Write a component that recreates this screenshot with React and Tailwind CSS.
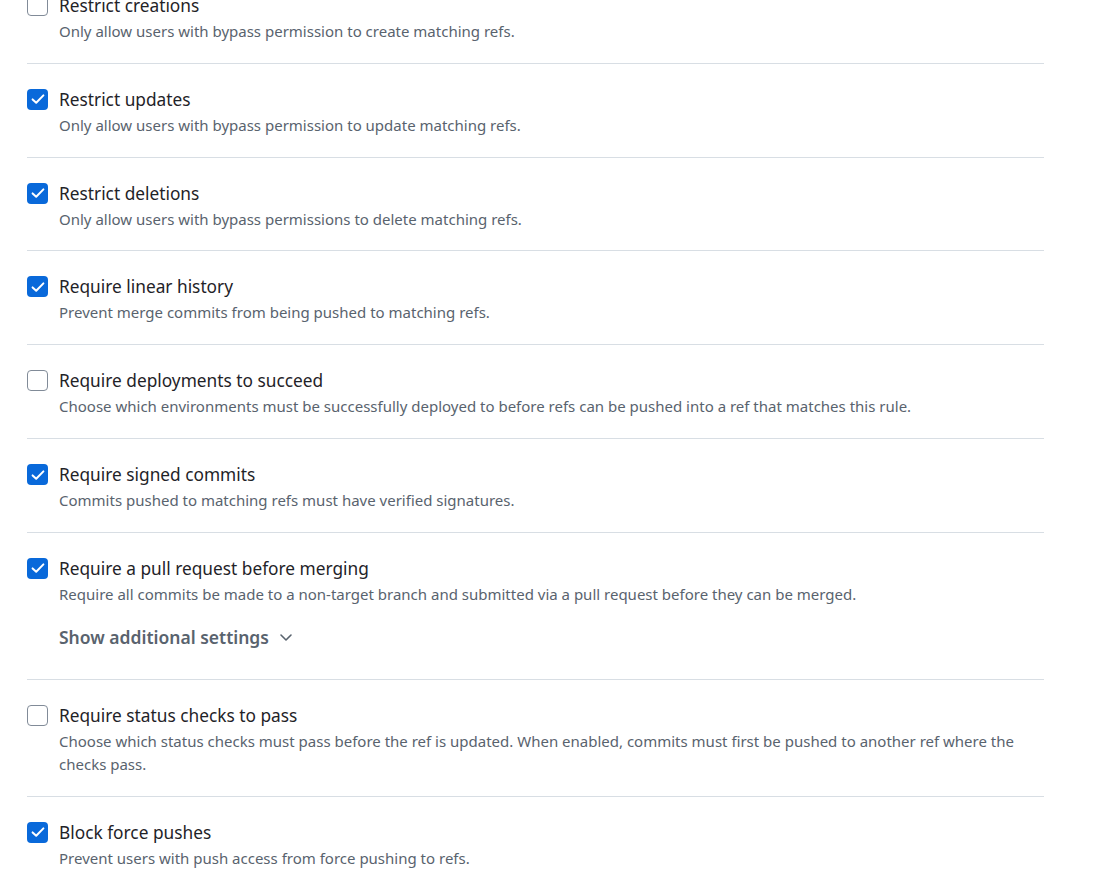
import React from "react";

const rows = [
  { title: "Restrict creations", desc: "Only allow users with bypass permission to create matching refs.", checked: false },
  { title: "Restrict updates", desc: "Only allow users with bypass permission to update matching refs.", checked: true },
  { title: "Restrict deletions", desc: "Only allow users with bypass permissions to delete matching refs.", checked: true },
  { title: "Require linear history", desc: "Prevent merge commits from being pushed to matching refs.", checked: true },
  { title: "Require deployments to succeed", desc: "Choose which environments must be successfully deployed to before refs can be pushed into a ref that matches this rule.", checked: false },
  { title: "Require signed commits", desc: "Commits pushed to matching refs must have verified signatures.", checked: true },
  { title: "Require a pull request before merging", desc: "Require all commits be made to a non-target branch and submitted via a pull request before they can be merged.", checked: true, more: true },
  { title: "Require status checks to pass", desc: (<>Choose which status checks must pass before the ref is updated. When enabled, commits must first be pushed to another ref where the<br />checks pass.</>), checked: false },
  { title: "Block force pushes", desc: "Prevent users with push access from force pushing to refs.", checked: true },
];

function Box({ checked }) {
  if (checked) {
    return (
      <span className="mt-[1px] flex h-[21px] w-[21px] shrink-0 items-center justify-center rounded-[4px] bg-[#0969da]">
        <svg width="16" height="16" viewBox="0 0 16 16" fill="none">
          <path d="M2.6 8.4 L6.2 11.8 L13.4 4.4" stroke="#ffffff" strokeWidth="2" strokeLinecap="round" strokeLinejoin="round" />
        </svg>
      </span>
    );
  }
  return <span className="mt-[1px] block h-[21px] w-[21px] shrink-0 rounded-[4px] border border-[#818b98] bg-white" />;
}

export default function App() {
  return (
    <div className="min-h-screen bg-white" style={{ fontFamily: '"Noto Sans", "Open Sans", sans-serif' }}>
      <div className="ml-[27px] w-[1017px] -mt-[30px]">
        {rows.map((r, i) => (
          <div key={i} className={`flex gap-[11px] pt-[24px] ${r.more ? "pb-[26px]" : "pb-[19.84px]"} ${i < rows.length - 1 ? "border-b border-[#d8dee4]" : ""}`}>
            <Box checked={r.checked} />
            <div className="min-w-0 flex-1">
              <div className="text-[17.3px] leading-[24px] text-[#1f2328]">{r.title}</div>
              <div className="mt-[2px] text-[15px] leading-[23px] text-[#59636e]">{r.desc}</div>
              {r.more && (
                <button className="mt-[15px] flex items-center gap-[9px] py-[4px] text-[17.5px] font-semibold leading-[24px] text-[#59636e]">
                  Show additional settings
                  <svg width="16" height="16" viewBox="0 0 16 16" fill="none">
                    <path d="M3 6 L8 11 L13 6" stroke="#59636e" strokeWidth="1.6" strokeLinecap="round" strokeLinejoin="round" />
                  </svg>
                </button>
              )}
            </div>
          </div>
        ))}
      </div>
    </div>
  );
}
